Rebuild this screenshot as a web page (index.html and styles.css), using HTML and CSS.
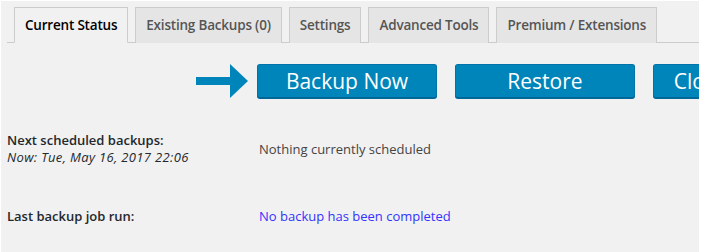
FILE: index.html
```html
<!DOCTYPE html>
<html lang="en">
<head>
<meta charset="UTF-8">
<title>UpdraftPlus Backups</title>
<link rel="stylesheet" href="styles.css">
</head>
<body>
<div class="wrap">
    <h2 class="nav-tab-wrapper">
        <a class="nav-tab nav-tab-active" href="#">Current Status</a>
        <a class="nav-tab" href="#">Existing Backups (0)</a>
        <a class="nav-tab" href="#">Settings</a>
        <a class="nav-tab" href="#">Advanced Tools</a>
        <a class="nav-tab" href="#">Premium / Extensions</a>
    </h2>

    <div class="actions">
        <svg class="arrow" width="52" height="34" viewBox="0 0 52 34">
            <rect x="0" y="13" width="35" height="8" fill="#0085ba"/>
            <polygon points="34,0 52,17 34,34" fill="#0085ba"/>
        </svg>
        <button class="button-primary">Backup Now</button>
        <button class="button-primary">Restore</button>
        <button class="button-primary">Clone/Migrate</button>
    </div>

    <table class="form-table">
        <tr class="row-next">
            <th>Next scheduled backups:<br><em>Now: Tue, May 16, 2017 22:06</em></th>
            <td>Nothing currently scheduled</td>
        </tr>
        <tr class="row-last">
            <th>Last backup job run:</th>
            <td><span class="last-run">No backup has been completed</span></td>
        </tr>
    </table>
</div>
</body>
</html>
```

FILE: styles.css
```css
body {
    margin: 0;
    padding: 1px 8px 0 1px;
    background-color: #fff;
    font-family: "Open Sans", Arial, sans-serif;
    font-size: 13px;
    color: #444;
    overflow: hidden;
}
.wrap {
    background-color: #f1f1f1;
    height: 251px;
    padding: 6px 0 0 6px;
    box-sizing: border-box;
    overflow: hidden;
}
.nav-tab-wrapper {
    margin: 0;
    padding-left: 7px;
    border-bottom: 1px solid #ccc;
    display: flex;
    gap: 7px;
    font-size: 13.5px;
    letter-spacing: -0.2px;
    line-height: 24px;
}
.nav-tab {
    display: block;
    padding: 5px 10px;
    border: 1px solid #ccc;
    border-bottom: none;
    background-color: #e5e5e5;
    color: #555;
    font-weight: 600;
    text-decoration: none;
    white-space: nowrap;
    margin-bottom: -1px;
}
.nav-tab-active {
    background-color: #f1f1f1;
    color: #000;
    border-bottom: 1px solid #f1f1f1;
}
.actions {
    display: flex;
    align-items: center;
    gap: 18px;
    padding: 21px 0 0 189px;
    white-space: nowrap;
}
.arrow {
    margin-right: -9px;
    flex-shrink: 0;
}
.button-primary {
    flex-shrink: 0;
    width: 180px;
    height: 34px;
    padding: 0;
    background-color: #0085ba;
    border: 1px solid #0073aa;
    border-bottom-color: #006799;
    border-radius: 3px;
    box-shadow: 0 1px 0 #006799;
    color: #fff;
    font-family: "Open Sans", Arial, sans-serif;
    font-size: 21px;
    line-height: 30px;
    cursor: pointer;
}
.form-table {
    border-collapse: collapse;
    margin-top: 31px;
}
.form-table th {
    width: 252px;
    text-align: left;
    vertical-align: middle;
    padding: 0;
    font-weight: 600;
    color: #23282d;
    line-height: 17px;
}
.form-table th em {
    font-weight: 400;
    letter-spacing: 0.35px;
}
.form-table td {
    padding: 0;
    vertical-align: middle;
}
.row-next th, .row-next td {
    height: 40px;
}
.row-last th, .row-last td {
    padding-top: 38px;
}
.last-run {
    color: #3333ff;
}
```
